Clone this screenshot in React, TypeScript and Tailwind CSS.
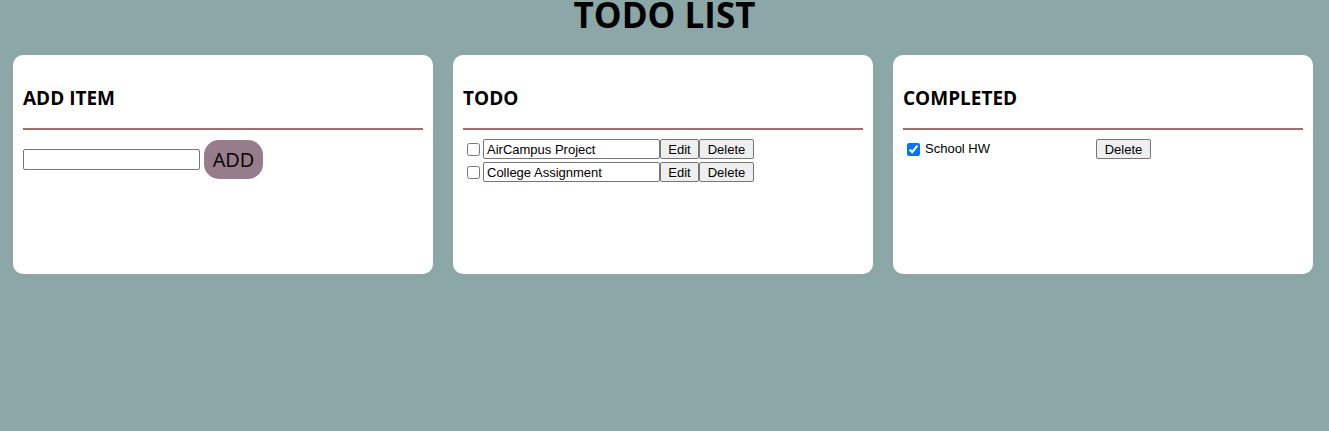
import { useState } from 'react';

type Item = { id: number; text: string };

export default function App() {
  const [newText, setNewText] = useState('');
  const [todos, setTodos] = useState<Item[]>([
    { id: 1, text: 'AirCampus Project' },
    { id: 2, text: 'College Assignment' },
  ]);
  const [done, setDone] = useState<Item[]>([{ id: 3, text: 'School HW' }]);

  const addItem = () => {
    if (!newText.trim()) return;
    setTodos((prev) => [...prev, { id: Date.now(), text: newText }]);
    setNewText('');
  };

  const complete = (item: Item) => {
    setTodos((prev) => prev.filter((t) => t.id !== item.id));
    setDone((prev) => [...prev, item]);
  };

  const btn =
    'h-[20px] px-[6px] bg-[#efefef] border border-[#767676] rounded-[2px] text-[13px] leading-none text-black hover:bg-[#e5e5e5]';

  return (
    <div className="min-h-[431px] w-full bg-[#8ca7a7] font-['Liberation_Sans',Arial,sans-serif]">
      {/* Title */}
      <h1 className="h-[41px] text-center text-[35px] leading-[29px] font-bold text-black font-['Open_Sans',sans-serif]">
        TODO LIST
      </h1>

      {/* Panels */}
      <div className="mt-[14px] flex gap-[20px] px-[13px]">
        {/* Add item */}
        <section className="w-[420px] h-[219px] bg-white rounded-[10px] px-[10px] pt-[30px]">
          <h2 className="h-[27px] text-[19px] leading-[27px] font-bold text-black font-['Open_Sans',sans-serif]">
            ADD ITEM
          </h2>
          <hr className="mt-[16px] border-0 h-[2px] bg-[#a86b6b]" />
          <div className="mt-[10px] flex items-center gap-[4px]">
            <input
              value={newText}
              onChange={(e) => setNewText(e.target.value)}
              className="w-[177px] h-[21px] border border-[#767676] rounded-[2px] px-[2px] text-[13px]"
            />
            <button
              onClick={addItem}
              className="w-[59px] h-[39px] rounded-[15px] bg-[#977c8b] text-[20px] text-black font-['Open_Sans',sans-serif]"
            >
              ADD
            </button>
          </div>
        </section>

        {/* Todo */}
        <section className="w-[420px] h-[219px] bg-white rounded-[10px] px-[10px] pt-[30px]">
          <h2 className="h-[27px] text-[19px] leading-[27px] font-bold text-black font-['Open_Sans',sans-serif]">
            TODO
          </h2>
          <hr className="mt-[16px] border-0 h-[2px] bg-[#a86b6b]" />
          <ul className="mt-[9px] flex flex-col gap-[3px]">
            {todos.map((t) => (
              <li key={t.id} className="flex items-center h-[20px]">
                <input
                  type="checkbox"
                  onChange={() => complete(t)}
                  className="ml-[4px] mr-[3px] w-[13px] h-[13px]"
                />
                <input
                  defaultValue={t.text}
                  className="w-[177px] h-[20px] border border-[#767676] rounded-[2px] px-[3px] text-[13px] text-black"
                />
                <button className={btn + ' w-[39px]'}>Edit</button>
                <button
                  onClick={() => setTodos((prev) => prev.filter((x) => x.id !== t.id))}
                  className={btn + ' w-[55px]'}
                >
                  Delete
                </button>
              </li>
            ))}
          </ul>
        </section>

        {/* Completed */}
        <section className="w-[420px] h-[219px] bg-white rounded-[10px] px-[10px] pt-[30px]">
          <h2 className="h-[27px] text-[19px] leading-[27px] font-bold text-black font-['Open_Sans',sans-serif]">
            COMPLETED
          </h2>
          <hr className="mt-[16px] border-0 h-[2px] bg-[#a86b6b]" />
          <ul className="mt-[9px] flex flex-col gap-[3px]">
            {done.map((t) => (
              <li key={t.id} className="flex items-center h-[20px]">
                <input type="checkbox" checked readOnly className="ml-[4px] mr-[5px] w-[13px] h-[13px]" />
                <span className="w-[171px] text-[13px] text-black">{t.text}</span>
                <button
                  onClick={() => setDone((prev) => prev.filter((x) => x.id !== t.id))}
                  className={btn + ' w-[55px]'}
                >
                  Delete
                </button>
              </li>
            ))}
          </ul>
        </section>
      </div>
    </div>
  );
}
